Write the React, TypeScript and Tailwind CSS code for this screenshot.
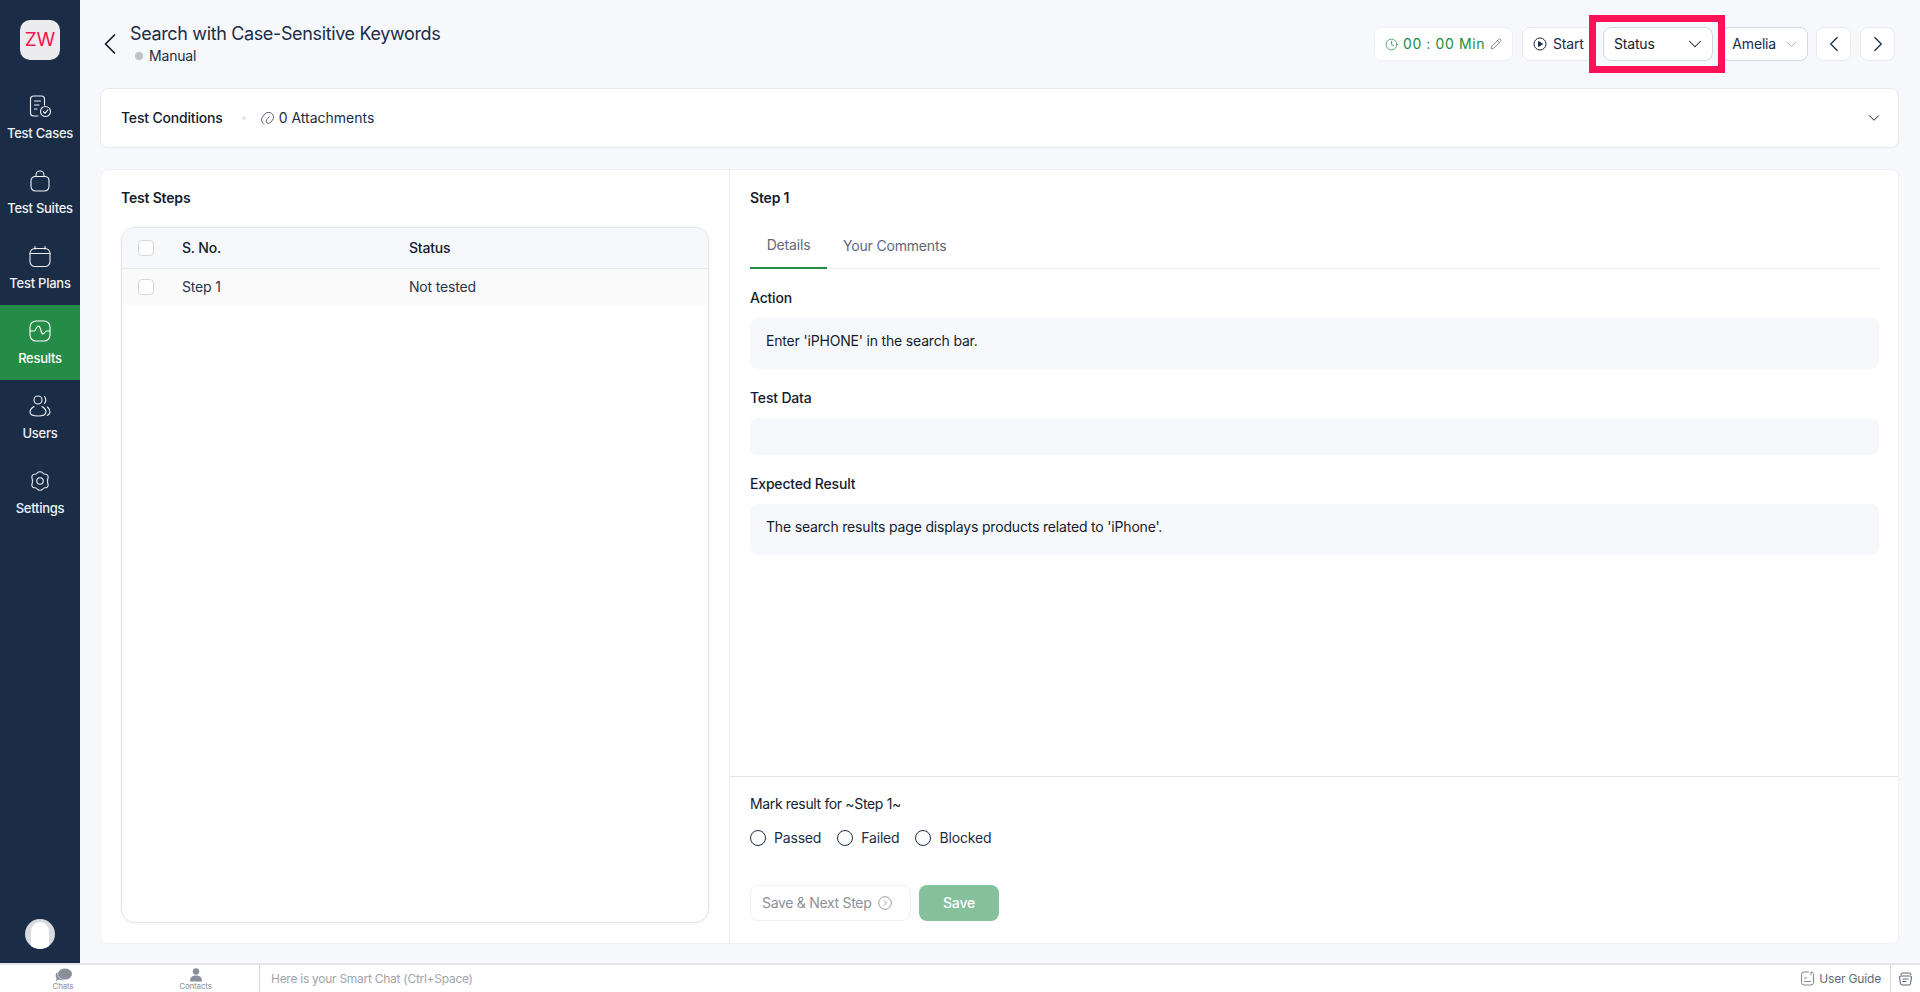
import { ChevronDown, ChevronLeft, ChevronRight, Pencil, Clock } from "lucide-react";
import type { ReactNode } from "react";

const Ico = ({ children, size = 24 }: { children: ReactNode; size?: number }) => (
  <svg width={size} height={size} viewBox="0 0 24 24" fill="none" stroke="currentColor" strokeWidth="1.1" strokeLinecap="round" strokeLinejoin="round">
    {children}
  </svg>
);

const navItems: { label: string; active?: boolean; icon: ReactNode }[] = [
  {
    label: "Test Cases",
    icon: (
      <Ico>
        <path d="M10 22H5.5A3 3 0 0 1 2.5 19V5A3 3 0 0 1 5.5 2H13.5A3 3 0 0 1 16.500 5V11" />
        <path d="M6.500 7H12.500M6.500 11H11M6.500 15H9" />
        <circle cx="17.500" cy="17.500" r="5" />
        <path d="M15.300 17.600L17 19.300L19.800 15.900" />
      </Ico>
    ),
  },
  {
    label: "Test Suites",
    icon: (
      <Ico>
        <path d="M7.500 7.500C5 7.500 3 9 3 11.500V17C3 20.500 5 22 8 22H16C19 22 21 20.500 21 17V11.500C21 9 19 7.500 16.500 7.500Z" />
        <path d="M8 7.500V6A4 4 0 0 1 16 6V7.500" />
      </Ico>
    ),
  },
  {
    label: "Test Plans",
    icon: (
      <Ico>
        <rect x="2" y="4.500" width="20" height="18" rx="5" />
        <path d="M2 9.500H22M7 2.500V5M17 2.500V5" />
      </Ico>
    ),
  },
  {
    label: "Results",
    active: true,
    icon: (
      <Ico>
        <rect x="2" y="2" width="20" height="20" rx="6" />
        <path d="M2 12H6C8 12 8 7 10.500 7C13 7 12.500 15 15 15C16.500 15 17 12 18.500 12H22" />
      </Ico>
    ),
  },
  {
    label: "Users",
    icon: (
      <Ico>
        <circle cx="10" cy="6" r="4" />
        <path d="M16.500 2.500C18 4.500 18 7.500 16.500 9.500" />
        <path d="M6 12.500C3.500 14 2 16 2 18C2 20.500 5.500 22 10 22C14.500 22 18 20.500 18 18C18 16 16.500 14 14 12.500" />
        <path d="M19.500 13C21.500 15 22 16 22 18C22 19.500 21 20.500 19.500 21.500" />
      </Ico>
    ),
  },
  {
    label: "Settings",
    icon: (
      <Ico>
        <circle cx="12" cy="12" r="3.200" />
        <path d="M9.500 3.800C10.500 2.400 13.500 2.400 14.500 3.800C15.300 4.900 16.200 5.300 17.500 5.200C19.300 5 20.800 7.500 20 9.100C19.400 10.300 19.400 13.700 20 14.900C20.800 16.500 19.300 19 17.500 18.800C16.200 18.700 15.300 19.100 14.500 20.200C13.500 21.600 10.500 21.600 9.500 20.200C8.700 19.100 7.800 18.700 6.500 18.800C4.700 19 3.200 16.500 4 14.900C4.600 13.700 4.600 10.300 4 9.100C3.200 7.500 4.700 5 6.500 5.200C7.800 5.300 8.700 4.900 9.500 3.800Z" />
      </Ico>
    ),
  },
];

const Sidebar = () => (
  <aside className="flex w-20 shrink-0 flex-col items-center bg-[#1b2c47] text-white">
    <div className="mt-5 mb-5 flex h-10 w-10 items-center justify-center rounded-[10px] bg-[#ececee] text-[19px] text-[#f5154f]">
      ZW
    </div>
    {navItems.map((item) => (
      <div
        key={item.label}
        className={`flex h-[75px] w-full flex-col items-center pt-[14px] text-[13px] font-medium leading-[16px] tracking-[-0.25px] text-[#f0f2f6] ${item.active ? "bg-[#248c46] text-white" : ""}`}
      >
        <div className="mb-[7px] h-[24px]">{item.icon}</div>
        <span>{item.label}</span>
      </div>
    ))}
    <div className="mt-auto mb-[14px] flex h-[30px] w-[30px] items-end justify-center overflow-hidden rounded-full bg-[#d9dade]">
      <div className="h-[27px] w-[18px] rounded-t-full bg-white" />
    </div>
  </aside>
);

const Checkbox = () => <div className="h-4 w-4 shrink-0 rounded-[4px] border border-[#d5d7de] bg-white" />;

const Radio = ({ label }: { label: string }) => (
  <label className="flex items-center gap-2">
    <span className="h-4 w-4 rounded-full border border-[#1b2c47] bg-white" />
    <span>{label}</span>
  </label>
);

const Field = ({ label, value, boxClass }: { label: string; value?: string; boxClass: string }) => (
  <div>
    <div className="mb-[12px] text-sm font-medium leading-[17px] text-[#141c2b]">{label}</div>
    <div className={`flex items-center rounded-lg bg-[#f7f8fc] px-[16px] pb-[5px] text-sm text-[#141c2b] ${boxClass}`}>{value}</div>
  </div>
);

const Header = () => (
  <header className="flex h-[88px] shrink-0 items-center justify-between pr-1">
    <div className="flex items-center">
      <ChevronLeft size={36} strokeWidth={1.15} className="-ml-[8px] mr-[2px] text-[#141c2b]" />
      <div>
        <div className="text-[18px] leading-[24px] tracking-[-0.36px] text-[#1b2c47]">Search with Case-Sensitive Keywords</div>
        <div className="flex items-center text-sm leading-[20px] text-[#1b2c47]">
          <span className="ml-[5px] mr-[6px] h-2 w-2 rounded-full bg-[#bfc1c9]" />
          Manual
        </div>
      </div>
    </div>
    <div className="flex h-[34px] items-stretch gap-2 text-sm text-[#1b2c47]">
      <div className="mr-[1px] flex w-[139px] items-center justify-center gap-[5px] rounded-lg border border-[#eef0f4] bg-white text-[#1c8a42]">
        <Clock size={13} strokeWidth={1.3} />
        <span className="tracking-[0.6px]">00 : 00 Min</span>
        <Pencil size={12} strokeWidth={1.3} className="text-[#4a5568]" />
      </div>
      <div className="flex w-[73px] items-center gap-[6px] rounded-lg border border-[#e9ebf0] bg-white pl-[10px]">
        <svg width="14" height="14" viewBox="0 0 14 14" fill="none" stroke="currentColor">
          <circle cx="7" cy="7" r="6" />
          <path d="M5.500 4.500L9.500 7L5.500 9.500Z" fill="currentColor" />
        </svg>
        Start
      </div>
      <div className="relative flex w-[110px] items-center justify-between rounded-lg border border-[#d5d7de] bg-white pl-[10px] pr-[6px] text-[#141c2b]">
        Status
        <ChevronDown size={22} strokeWidth={1.1} />
        <div className="absolute -top-[13px] -right-[13px] -bottom-[13px] -left-[15px] border-[7px] border-[#ff1158]" />
      </div>
      <div className="flex w-[87px] items-center justify-end gap-[7px] rounded-lg border border-[#d5d7de] bg-white pr-[7px]">
        Amelia
        <ChevronDown size={17} strokeWidth={1} className="text-[#8b909b]" />
      </div>
      <div className="flex w-[35px] items-center justify-center rounded-lg border border-[#e9ebf0] bg-white">
        <ChevronLeft size={26} strokeWidth={1.1} />
      </div>
      <div className="ml-[1px] flex w-[35px] items-center justify-center rounded-lg border border-[#e9ebf0] bg-white">
        <ChevronRight size={26} strokeWidth={1.1} />
      </div>
    </div>
  </header>
);

const Conditions = () => (
  <section className="flex h-[60px] shrink-0 items-center rounded-lg border border-[#e7e8ee] bg-white pl-[20px] pr-[15px] text-sm text-[#1b2c47]">
    <span className="font-medium text-[#141c2b]">Test Conditions</span>
    <span className="ml-[19px] mr-[14px] h-1 w-1 rounded-full bg-[#e5e7ec]" />
    <svg width="15" height="15" viewBox="0 0 15 15" fill="none" stroke="#4a5568" strokeWidth="0.9" strokeLinecap="round" className="mr-[4px]">
      <path d="M4 13C1.500 11.500 0.800 8.500 2.500 6L4.800 3C6.500 1 9.500 0.800 11.800 2.500C14 4.300 14 7 12.500 9L10.500 11.500C9 13 7 12.500 6.500 11C6 9.800 6.500 8.500 7.500 7.500L9 6" />
    </svg>
    <span className="tracking-[0px]">0 Attachments</span>
    <ChevronDown size={18} strokeWidth={1.3} className="ml-auto text-[#141c2b]" />
  </section>
);

const StepsPanel = () => (
  <div className="flex h-full w-[629px] shrink-0 flex-col border-r border-[#eceef3] px-[20px] pt-[19px] pb-[20px]">
    <div className="mb-[21px] text-sm font-semibold leading-[17px] text-[#141c2b]">Test Steps</div>
    <div className="flex-1 overflow-hidden rounded-[14px] border border-[#e3e5ea] bg-white shadow-[0_0_4px_#f2f3f7]">
      <div className="flex h-[41px] items-center border-b border-[#e7e8ee] bg-[#f7f8fc] pl-[16px] text-sm font-medium text-[#141c2b]">
        <Checkbox />
        <span className="ml-[28px] w-[227px]">S. No.</span>
        <span>Status</span>
      </div>
      <div className="flex h-[36px] items-center bg-[#fafafa] pl-[16px] text-sm text-[#27364f]">
        <Checkbox />
        <span className="ml-[28px] w-[227px]">Step 1</span>
        <span>Not tested</span>
      </div>
    </div>
  </div>
);

const DetailPanel = () => (
  <div className="flex h-full flex-1 flex-col">
    <div className="flex-1 pl-[20px] pr-[19px] pt-[19px]">
      <div className="text-sm font-semibold leading-[17px] text-[#141c2b]">Step 1</div>
      <div className="mt-[20px] flex h-[43px] items-stretch border-b border-[#eceef3] text-sm text-[#5f6877]">
        <div className="-mb-[1px] flex w-[77px] items-center justify-center border-b-2 border-[#248c46] pb-[3px]">Details</div>
        <div className="ml-[16px] flex items-center pb-[2px]">Your Comments</div>
      </div>
      <div className="mt-[20px] flex flex-col gap-[20px]">
        <Field label="Action" value="Enter 'iPHONE' in the search bar." boxClass="h-[51px]" />
        <Field label="Test Data" boxClass="h-[37px]" />
        <Field label="Expected Result" value="The search results page displays products related to 'iPhone'." boxClass="h-[51px]" />
      </div>
    </div>
    <div className="h-[167px] shrink-0 border-t border-[#e3e5ea] pl-[20px] pt-[18px]">
      <div className="text-sm leading-[17px] tracking-[-0.35px] text-[#141c2b]">Mark result for ~Step 1~</div>
      <div className="mt-[16px] flex h-[20px] items-center gap-[16px] text-sm text-[#1b2c47]">
        <Radio label="Passed" />
        <Radio label="Failed" />
        <Radio label="Blocked" />
      </div>
      <div className="mt-[37px] flex h-[36px] items-stretch gap-2 text-sm">
        <div className="flex w-[161px] items-center gap-[7px] rounded-lg border border-[#eff0f5] pl-[11px] tracking-[-0.3px] text-[#8b909b]">
          Save &amp; Next Step
          <ChevronRightCircle />
        </div>
        <div className="flex w-[80px] items-center justify-center rounded-lg bg-[#85c19d] font-medium text-white">Save</div>
      </div>
    </div>
  </div>
);

const ChevronRightCircle = () => (
  <svg width="14" height="14" viewBox="0 0 14 14" fill="none" stroke="#8b909b" strokeWidth="0.9">
    <circle cx="7" cy="7" r="6.300" />
    <path d="M6 4.500L8.500 7L6 9.500" />
  </svg>
);

const BottomBar = () => (
  <footer className="flex h-[29px] shrink-0 items-stretch border-t-2 border-[#e4e4ea] bg-white">
    <div className="flex w-[126px] flex-col items-center justify-center pt-[1px] text-[8px] leading-[9px] text-[#8a8f99]">
      <svg width="17" height="14" viewBox="0 0 17 14" fill="#8a8f99">
        <ellipse cx="10" cy="6" rx="7" ry="5.500" />
        <path d="M2.500 4C0.500 5.500 0 8 1.500 10L1 13L4 11.500C6 12.500 8 12.500 9.500 12C6 12 2 9 2.500 4Z" />
      </svg>
      Chats
    </div>
    <div className="flex w-[134px] flex-col items-center justify-center border-r border-[#d9dbe0] pl-[6px] pt-[1px] text-[8px] leading-[9px] text-[#8a8f99]">
      <svg width="14" height="14" viewBox="0 0 14 14" fill="#8a8f99">
        <circle cx="7" cy="3.500" r="3.200" />
        <path d="M1 13.500C1 9.500 3 7.500 7 7.500C11 7.500 13 9.500 13 13.500Z" />
      </svg>
      Contacts
    </div>
    <div className="flex flex-1 items-center pl-[11px] text-xs tracking-[-0.27px] text-[#a1a4ac]">Here is your Smart Chat (Ctrl+Space)</div>
    <div className="flex items-center gap-[5px] pr-[9px] text-xs text-[#5f6877]">
      <svg width="13" height="15" viewBox="0 0 13 15" fill="none" stroke="#5f6877" strokeWidth="0.8" strokeLinecap="round">
        <path d="M7.500 1H3A2.500 2.500 0 0 0 0.500 3.500V11.500A2.500 2.500 0 0 0 3 14H10A2.500 2.500 0 0 0 12.500 11.500V3.500C12.500 2 11.500 1 10 1V4" />
        <path d="M3.500 7H5.500M3.500 10.500H9.500" />
      </svg>
      User Guide
    </div>
    <div className="flex w-[30px] items-center justify-center border-l border-[#d9dbe0]">
      <svg width="15" height="14" viewBox="0 0 15 14" fill="none" stroke="#5f6877" strokeWidth="1.1" strokeLinecap="round">
        <path d="M3 4H12C13 4 13.500 4.500 13.500 5.500L12.500 11.500C12.300 12.500 11.500 13 10.500 13H4.500C3.500 13 2.700 12.500 2.500 11.500L1.500 5.500C1.500 4.500 2 4 3 4Z" />
        <path d="M3 2.500C3.500 1.500 4 1 5 1H11C12 1 12.500 1.500 13 2.500M5 7H10M5 9.500H8" />
      </svg>
    </div>
  </footer>
);

export default function App() {
  return (
    <div className="flex h-[992px] w-[1920px] flex-col overflow-hidden bg-[#f7f8fc] font-['Inter',sans-serif] tracking-[-0.18px]">
      <div className="flex min-h-0 flex-1">
        <Sidebar />
        <main className="flex min-w-0 flex-1 flex-col pl-[20px] pr-[21px] pb-[19px]">
          <Header />
          <Conditions />
          <section className="mt-[21px] flex min-h-0 flex-1 rounded-lg border border-[#f0f1f5] bg-white">
            <StepsPanel />
            <DetailPanel />
          </section>
        </main>
      </div>
      <BottomBar />
    </div>
  );
}
